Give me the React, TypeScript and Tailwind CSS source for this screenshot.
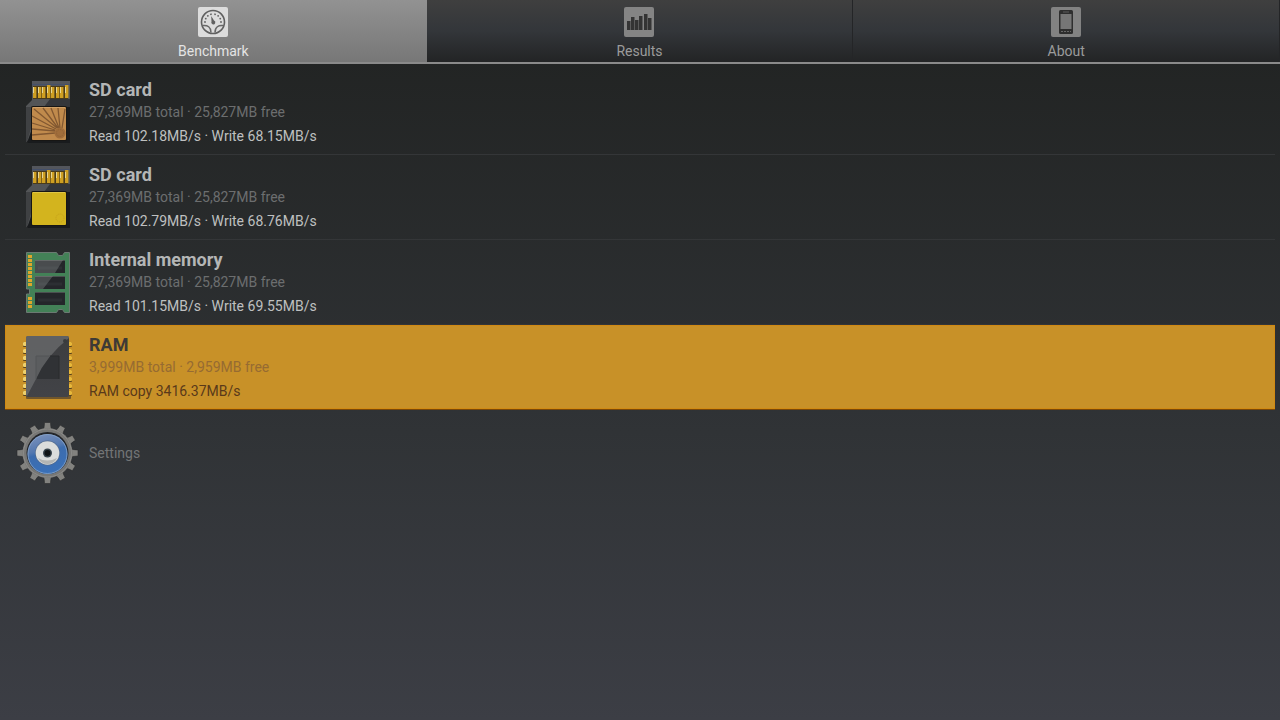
import { useState } from "react";
import type { ReactNode } from "react";
import clsx from "clsx";

type Row = {
  id: string;
  title: string;
  space: string;
  speed: string;
  icon: ReactNode;
};

function GaugeIcon() {
  return (
    <svg width="30" height="30" viewBox="0 0 30 30" aria-hidden="true">
      <rect width="30" height="30" rx="2" fill="#dcdcdc" />
      <circle cx="15" cy="15" r="11.5" fill="none" stroke="#606060" strokeWidth="1.6" />
      <g fill="#606060">
        {[-90, -65, -40, -15, 15, 40, 65, 90].map((a) => (
          <circle key={a} cx="15" cy="7" r=".9" transform={`rotate(${a} 15 15)`} />
        ))}
        <path d="M13.200 9l2.800 4.500a2 2 0 1 1-2.500 1z" />
      </g>
      <path d="M5 18.500c4.500-.5 8 1.500 8 7M25 18.500c-4.500-.5-8 1.500-8 7" fill="none" stroke="#686868" strokeWidth="1.500" />
    </svg>
  );
}

function BarsIcon() {
  const bars = [
    [3, 14],
    [7, 10],
    [11, 13],
    [15, 9],
    [20, 7],
    [24, 11],
  ];
  return (
    <svg width="30" height="30" viewBox="0 0 30 30" aria-hidden="true">
      <rect width="30" height="30" rx="2" fill="#848484" />
      {bars.map(([x, y]) => (
        <rect key={x} x={x} y={y} width="3.500" height={23 - y} fill="#343434" />
      ))}
    </svg>
  );
}

function PhoneIcon() {
  return (
    <svg width="30" height="30" viewBox="0 0 30 30" aria-hidden="true">
      <rect width="30" height="30" rx="2" fill="#828282" />
      <rect x="8" y="3" width="14" height="24" rx="1.500" fill="#2e2e2e" />
      <rect x="9.500" y="7" width="11" height="15" fill="#767676" />
      <path d="M12 5h6" stroke="#5c5c5c" />
      <path d="M10 24.500h10" stroke="#686868" strokeDasharray="2 1" />
    </svg>
  );
}

function SdCardIcon({ rays = false }: { rays?: boolean }) {
  return (
    <svg width="64" height="64" viewBox="0 0 64 64" className="shrink-0" aria-hidden="true">
      <path d="M16 1h38v62H12l-2-2V26l6-6z" fill="#191b1d" />
      <path d="M16 1h38v18L42 26H24L12 60l-2 2V26l6-6z" fill="#535557" />
      <path d="M34 19h20v8H28z" fill="#34363a" />
      <path d="M10 27h5v21l-4 14h-1z" fill="#3f4143" />
      <rect x="16" y="1" width="38" height="5" fill="#53565c" />
      <path d="M16 4.500h38" stroke="#44506a" />
      <rect x="17" y="6" width="35" height="13" fill="#4a3b1a" />
      {[17, 22, 26, 31, 35, 40, 44, 49].map((x, i) => (
        <g key={x}>
          <rect x={x} y={i % 4 === 3 ? 5 : 7} width="3.400" height={i % 4 === 3 ? 13 : 11} fill="#cf9f22" />
          <rect x={x} y="7" width="1" height="6" fill="#e6d694" />
        </g>
      ))}
      <rect x="15" y="26" width="36" height="35" rx="2" fill="#171614" />
      <rect x="16" y="27" width="34" height="33" rx="1" fill={rays ? "#c08a4c" : "#d3b41e"} />
      <path d="M17 27.500h32" stroke={rays ? "#d0a066" : "#e0c645"} />
      {rays ? (
        <>
          <path
            d="M39 53L16 55M39 51L16 49M39 50L16 43M40 49L16 36M41 48L18 29M42 48L27 28M43 48L35 28M44 48L42 28M46 48L49 29"
            stroke="#825831"
            strokeWidth="1.300"
          />
          <circle cx="44" cy="53" r="5.500" fill="#a06d3b" />
          <circle cx="44" cy="53" r="3.500" fill="none" stroke="#8e6035" strokeDasharray="1 1" />
        </>
      ) : (
        <circle cx="44" cy="53" r="4" fill="none" stroke="#c6a11b" strokeDasharray="1 1" />
      )}
    </svg>
  );
}

function MemoryIcon() {
  return (
    <svg width="64" height="64" viewBox="0 0 64 64" className="shrink-0" aria-hidden="true">
      <path
        d="M10.500 2.500h30l2 3h4l2-3h5v60h-5l-2-3h-4l-2 3h-30V44h3v-5h-3z"
        fill="#438157"
        stroke="#6b7a72"
      />
      {[5, 9, 13, 17, 21, 25, 29, 33, 47, 51, 55].map((y) => (
        <rect key={y} x="12" y={y} width="4" height="3" fill="#dda62b" />
      ))}
      {[10, 26, 42].map((y) => (
        <g key={y}>
          <rect x="19" y={y} width="30" height="13" fill="#24262a" />
          <rect x="19" y={y} width="30" height="1" fill="#4b5050" />
          <path d={`M22 ${y + 8}h24`} stroke="#2c2f33" strokeWidth="3" />
        </g>
      ))}
      <path d="M19 10h28L39 23H19zM19 26h18l-10 13h-8z" fill="#a0a4a2" opacity=".3" />
    </svg>
  );
}

function ChipIcon() {
  return (
    <svg width="64" height="64" viewBox="0 0 64 64" className="shrink-0" aria-hidden="true">
      <defs>
        <linearGradient id="chip" x1="0" y1="0" x2="0" y2="1">
          <stop offset="0" stopColor="#3c3d3f" />
          <stop offset="1" stopColor="#424347" />
        </linearGradient>
      </defs>
      <rect x="10" y="60" width="45" height="4" rx="1" fill="#70562c" />
      {[7, 14, 21, 28, 35, 42, 49, 56].map((y) => (
        <g key={y}>
          <rect x="7" y={y} width="5" height="5" rx="1" fill="#5a431b" />
          <rect x="51" y={y} width="5" height="5" rx="1" fill="#5a431b" />
          <rect x="7" y={y} width="4" height="4" rx="1" fill="#eed06c" />
          <rect x="52" y={y} width="4" height="4" rx="1" fill="#e8b83a" />
        </g>
      ))}
      <rect x="10" y="1" width="43" height="61" rx="2" fill="url(#chip)" />
      <path d="M20 21h23v23H20z" fill="#303235" />
      <path d="M12 1h39q2 0 2 2Q30 21 20 44L11 61l-1-1V3q0-2 2-2z" fill="#737576" opacity=".65" />
      <path d="M20 44V21h14" fill="none" stroke="#525456" />
      <path d="M34 21h9v23" fill="none" stroke="#292b2d" />
      <circle cx="49" cy="6" r="2" fill="#393b3d" />
    </svg>
  );
}

function GearIcon() {
  return (
    <svg width="64" height="64" viewBox="0 0 64 64" className="shrink-0" aria-hidden="true">
      <defs>
        <linearGradient id="blue" x1="0" y1="0" x2="0.300" y2="1">
          <stop offset="0" stopColor="#8195bd" />
          <stop offset="0.450" stopColor="#5579b0" />
          <stop offset="0.550" stopColor="#3c6cae" />
          <stop offset="1" stopColor="#3a70b7" />
        </linearGradient>
      </defs>
      <g stroke="#292a2b" strokeWidth=".6">
        {[0, 30, 60, 90, 120, 150, 180, 210, 240, 270, 300, 330].map((a) => (
          <path key={a} d="M26.500 9q2-1 2-7.500h6q0 6.500 2 7.500z" fill="#82827f" transform={`rotate(${a} 31.500 32)`} />
        ))}
      </g>
      <circle cx="31.500" cy="32" r="25" fill="#777775" />
      <circle cx="31.500" cy="32" r="24" fill="none" stroke="#8b8b89" />
      <circle cx="31.500" cy="32" r="21" fill="#232529" />
      <circle cx="31.500" cy="33" r="20" fill="url(#blue)" />
      <circle cx="31.500" cy="33" r="19.500" fill="none" stroke="#86a5ca" strokeWidth=".8" />
      <circle cx="31.500" cy="32" r="12.500" fill="#526b8e" />
      <circle cx="31.500" cy="32" r="11.800" fill="#dbdddc" />
      <path d="M22 37q9 5 19 0-3 6-9.500 6T22 37z" fill="#b2b4b3" />
      <circle cx="31.500" cy="32" r="4.500" fill="#36434b" />
      <circle cx="31.500" cy="32" r="3" fill="#101416" />
    </svg>
  );
}

const tabs = [
  { name: "Benchmark", icon: <GaugeIcon /> },
  { name: "Results", icon: <BarsIcon /> },
  { name: "About", icon: <PhoneIcon /> },
];

const rows: Row[] = [
  {
    id: "sd0",
    title: "SD card",
    space: "27,369MB total · 25,827MB free",
    speed: "Read 102.18MB/s · Write 68.15MB/s",
    icon: <SdCardIcon rays />,
  },
  {
    id: "sd1",
    title: "SD card",
    space: "27,369MB total · 25,827MB free",
    speed: "Read 102.79MB/s · Write 68.76MB/s",
    icon: <SdCardIcon />,
  },
  {
    id: "internal",
    title: "Internal memory",
    space: "27,369MB total · 25,827MB free",
    speed: "Read 101.15MB/s · Write 69.55MB/s",
    icon: <MemoryIcon />,
  },
  {
    id: "ram",
    title: "RAM",
    space: "3,999MB total · 2,959MB free",
    speed: "RAM copy 3416.37MB/s",
    icon: <ChipIcon />,
  },
];

export default function App() {
  const [tab, setTab] = useState("Benchmark");
  const [selected, setSelected] = useState("ram");

  return (
    <div className="min-h-screen bg-linear-to-b from-[#202221] via-[#303336] via-60% to-[#3c3e45] font-[Roboto,sans-serif] text-sm">
      <nav className="grid grid-cols-3 border-b-2 border-[#8a8a8a] bg-[#2b2c2d]">
        {tabs.map((t) => (
          <button
            key={t.name}
            type="button"
            onClick={() => setTab(t.name)}
            className={clsx(
              "flex flex-col items-center gap-1 pt-[7px] pb-px",
              tab === t.name
                ? "bg-linear-to-b from-[#929292] to-[#777777] text-[#e4e4e4]"
                : "border-r border-[#242527] bg-linear-to-b from-[#3f3f3f] via-[#33363a] to-[#232425] text-[#9b9b9b]"
            )}
          >
            {t.icon}
            <span className="leading-5">{t.name}</span>
          </button>
        ))}
      </nav>

      <ul className="px-[5px] pt-[6px]">
        {rows.map((r) => {
          const active = selected === r.id;
          return (
            <li key={r.id}>
              <button
                type="button"
                onClick={() => setSelected(r.id)}
                className={clsx(
                  "flex h-[85px] w-full items-center gap-[9px] border-b px-[11px] text-left",
                  active
                    ? "border-[#7a4707] bg-[#c89128] inset-ring-1 inset-ring-[#d18a13]"
                    : "border-[#343638]"
                )}
              >
                {r.icon}
                <span className="flex flex-col pt-[3px]">
                  <span className={clsx("text-lg leading-5 font-bold", active ? "text-[#3d3a36]" : "text-[#b4b6b6]")}>
                    {r.title}
                  </span>
                  <span className={clsx("leading-6", active ? "text-[#966b32]" : "text-[#6c6e6f]")}>{r.space}</span>
                  <span className={clsx("leading-6", active ? "text-[#59391a]" : "text-[#bfc0c0]")}>{r.speed}</span>
                </span>
              </button>
            </li>
          );
        })}
        <li>
          <button type="button" className="flex h-[85px] w-full items-center gap-[9px] px-[11px] text-left text-[#737576]">
            <GearIcon />
            <span>Settings</span>
          </button>
        </li>
      </ul>
    </div>
  );
}
